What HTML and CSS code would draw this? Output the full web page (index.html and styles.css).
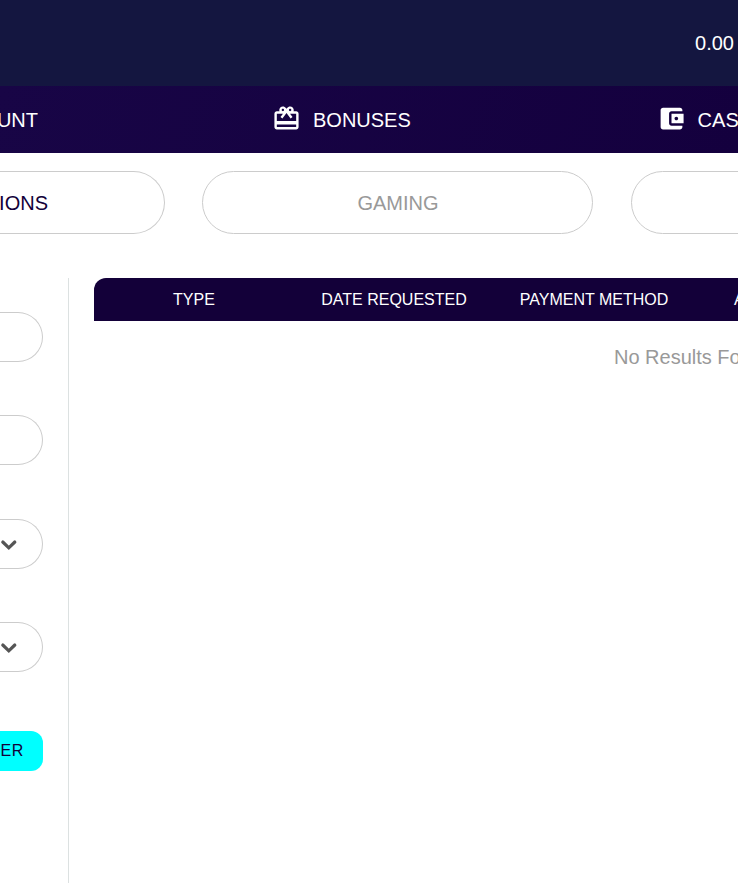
FILE: index.html
```
<!DOCTYPE html>
<html lang="en">
<head>
<meta charset="utf-8">
<title>Transactions</title>
<link rel="stylesheet" href="styles.css">
</head>
<body>
<header class="topbar"><span class="balance">0.00</span></header>
<nav class="nav">
  <a class="nav-account"><span>ACCOUNT</span></a>
  <a class="nav-bonuses">
    <svg class="icon" viewBox="0 0 24 24"><path d="M20 6h-2.180c.11-.31.18-.65.18-1 0-1.660-1.340-3-3-3-1.050 0-1.960.54-2.500 1.350l-.5.670-.5-.680C10.960 2.540 10.050 2 9 2 7.340 2 6 3.340 6 5c0 .35.070.69.180 1H4c-1.110 0-1.990.89-1.990 2L2 19c0 1.110.89 2 2 2h16c1.110 0 2-.89 2-2V8c0-1.110-.89-2-2-2zm-5-2c.55 0 1 .45 1 1s-.45 1-1 1-1-.45-1-1 .45-1 1-1zM9 4c.55 0 1 .45 1 1s-.45 1-1 1-1-.45-1-1 .45-1 1-1zm11 15H4v-2h16v2zm0-5H4V8h5.080L7 10.830 8.620 12 12 7.400l3.380 4.600L17 10.830 14.920 8H20v6z"/></svg>
    <span>BONUSES</span>
  </a>
  <a class="nav-cashier">
    <svg class="icon" viewBox="0 0 24 24"><path d="M21 18v1c0 1.100-.9 2-2 2H5c-1.110 0-2-.9-2-2V5c0-1.100.89-2 2-2h14c1.100 0 2 .9 2 2v1h-9c-1.110 0-2 .9-2 2v8c0 1.100.89 2 2 2h9zm-9-2h10V8H12v8zm4-2.500c-.83 0-1.500-.67-1.500-1.500s.67-1.500 1.500-1.500 1.500.67 1.500 1.500-.67 1.500-1.500 1.500z"/></svg>
    <span>CASHIER</span>
  </a>
</nav>
<div class="tabs">
  <a class="tab tab-first">TRANSACTIONS</a>
  <a class="tab tab-gaming">GAMING</a>
  <a class="tab tab-last"></a>
</div>
<main class="content">
  <aside class="filters">
    <div class="field"></div>
    <div class="field"></div>
    <div class="field"><svg class="chevron" viewBox="0 0 18 12"><path d="M2.800 3 8.800 8.800 14.800 3"/></svg></div>
    <div class="field"><svg class="chevron" viewBox="0 0 18 12"><path d="M2.800 3 8.800 8.800 14.800 3"/></svg></div>
    <button class="filter-button">FILTER</button>
  </aside>
  <section class="results">
    <div class="table-head">
      <span class="col-type">TYPE</span>
      <span class="col-date">DATE REQUESTED</span>
      <span class="col-method">PAYMENT METHOD</span>
      <span>AMOUNT</span>
    </div>
    <p class="empty">No Results Found</p>
  </section>
</main>
</body>
</html>
```
FILE: styles.css
```
* { box-sizing: border-box; }
body {
  margin: 0;
  height: 883px;
  display: flex;
  flex-direction: column;
  overflow: hidden;
  background: #fff;
  font-family: "Liberation Sans", Arial, sans-serif;
  font-size: 20px;
  white-space: nowrap;
}
.topbar {
  height: 86px;
  flex: none;
  display: flex;
  align-items: center;
  justify-content: flex-end;
  padding-right: 4px;
  background: #141640;
  color: #fff;
}
.nav {
  height: 67px;
  flex: none;
  display: flex;
  align-items: center;
  background: linear-gradient(110deg, #180546, #14003e);
  color: #fff;
}
.nav a { display: flex; align-items: center; flex: none; }
.nav span { padding-top: 1px; }
.nav .nav-account { width: 38px; justify-content: flex-end; margin-right: 234px; }
.nav-bonuses { width: 386px; gap: 12px; }
.nav-cashier { gap: 11.600px; }
.icon { width: 29px; height: 29px; flex: none; fill: #fff; margin-top: -3px; }
.nav-cashier .icon { margin-left: -1px; }
.tabs { display: flex; flex: none; gap: 37px; margin-top: 18px; }
.tab {
  flex: none;
  height: 63px;
  display: flex;
  align-items: center;
  justify-content: center;
  padding-top: 2px;
  border: 1px solid #ccc;
  border-radius: 32px;
  color: #999;
}
.tab-first {
  width: 165px;
  justify-content: flex-end;
  padding-right: 116px;
  border-left: 0;
  border-radius: 0 32px 32px 0;
  color: #130039;
}
.tab-gaming { width: 391px; padding-left: 1px; }
.tab-last { width: 391px; margin-left: 1px; }
.content { flex: 1; display: flex; margin-top: 44px; }
.filters {
  width: 69px;
  flex: none;
  border-right: 1px solid #dce1e1;
  padding-top: 34px;
}
.field {
  width: 43px;
  height: 50px;
  margin-bottom: 53.4px;
  border: 1px solid #ccc;
  border-left: 0;
  border-radius: 0 25px 25px 0;
  display: flex;
  align-items: center;
}
.chevron {
  width: 18px;
  height: 12px;
  margin-top: 2px;
  fill: none;
  stroke: #555;
  stroke-width: 3.2;
  stroke-linecap: round;
}
.filter-button {
  display: flex;
  align-items: center;
  justify-content: flex-end;
  width: 43px;
  height: 40px;
  margin-top: 59px;
  padding: 0 19px 0 0;
  border: 0;
  border-radius: 0 12px 12px 0;
  background: #0ff;
  color: #130039;
  font: inherit;
  font-size: 16px;
  letter-spacing: 0.6px;
  overflow: hidden;
}
.results { flex: none; width: 1200px; margin-left: 25px; }
.table-head {
  height: 43px;
  display: flex;
  align-items: center;
  border-radius: 12px 12px 0 0;
  background: #130039;
  color: #fff;
  font-size: 16px;
}
.col-type { width: 200px; text-align: center; }
.col-date { width: 200px; text-align: center; }
.col-method { width: 200px; text-align: center; margin-right: 40px; }
.empty { margin: 25px 0 0; text-align: center; color: #999; }
```
